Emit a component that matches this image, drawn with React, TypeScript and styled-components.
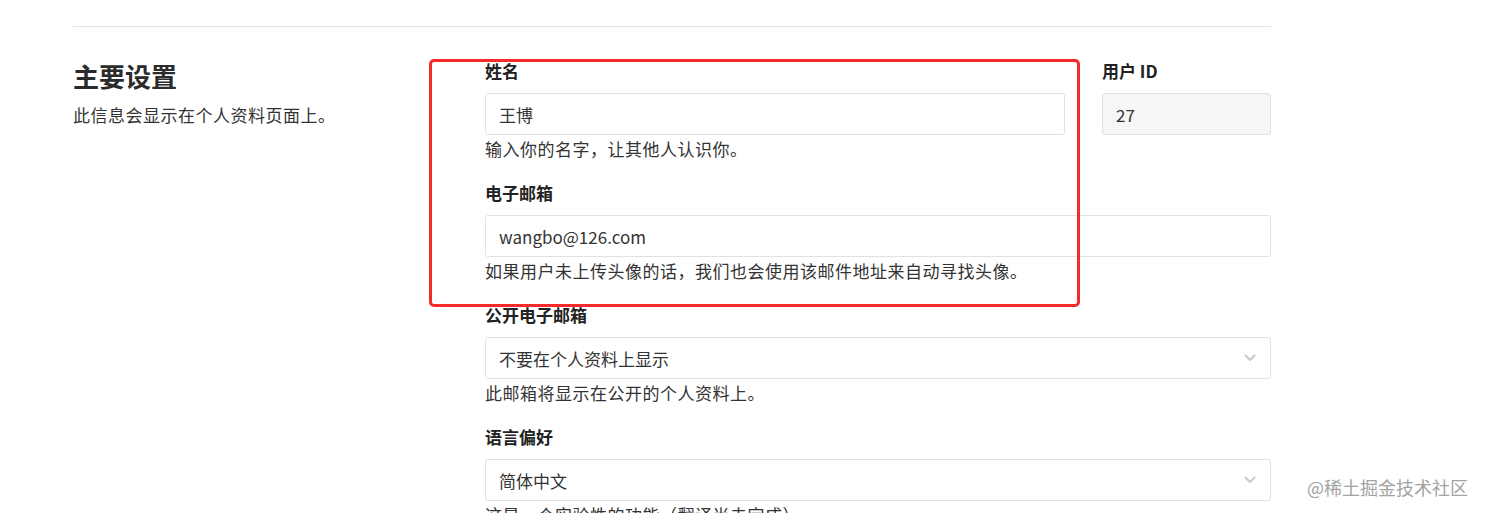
import styled, { createGlobalStyle } from "styled-components";

const GlobalStyle = createGlobalStyle`
  html, body {
    margin: 0;
    padding: 0;
    background: #ffffff;
  }
  body {
    font-family: "Noto Sans CJK SC", "Liberation Sans", sans-serif;
    color: #333333;
  }
`;

interface Option {
  label: string;
  hint: string;
  value: string;
}

const selectFields: Option[] = [
  { label: "公开电子邮箱", value: "不要在个人资料上显示", hint: "此邮箱将显示在公开的个人资料上。" },
  { label: "语言偏好", value: "简体中文", hint: "这是一个实验性的功能（翻译尚未完成）" },
];

const Chevron = () => (
  <svg width="12" height="8" viewBox="0 0 12 8" fill="none">
    <polyline points="1.5,1.5 6,6 10.5,1.5" stroke="#c9c9c9" strokeWidth="2" strokeLinecap="round" strokeLinejoin="round" />
  </svg>
);

export default function App() {
  return (
    <Page>
      <GlobalStyle />
      <Divider />
      <Section>
        <Intro>
          <Heading>主要设置</Heading>
          <Subtitle>此信息会显示在个人资料页面上。</Subtitle>
        </Intro>
        <Fields>
          <Row>
            <Field>
              <Label>姓名</Label>
              <Input readOnly value="王博" />
              <Hint>输入你的名字，让其他人认识你。</Hint>
            </Field>
            <IdField>
              <Label>用户 ID</Label>
              <Input readOnly value="27" $disabled />
            </IdField>
          </Row>
          <Field>
            <Label>电子邮箱</Label>
            <Input readOnly value="wangbo@126.com" />
            <Hint>如果用户未上传头像的话，我们也会使用该邮件地址来自动寻找头像。</Hint>
          </Field>
          {selectFields.map((f) => (
            <Field key={f.label}>
              <Label>{f.label}</Label>
              <SelectBox role="combobox">
                <span>{f.value}</span>
                <Chevron />
              </SelectBox>
              <Hint>{f.hint}</Hint>
            </Field>
          ))}
        </Fields>
      </Section>
      <Highlight />
      <Watermark>@稀土掘金技术社区</Watermark>
    </Page>
  );
}

const Page = styled.div`
  position: relative;
  height: 513px;
  overflow: hidden;
  padding: 26px 0 0 73px;
  box-sizing: border-box;
`;

const Divider = styled.div`
  width: 1198px;
  height: 1px;
  background: #e4e4e4;
`;

const Section = styled.div`
  display: grid;
  grid-template-columns: 412px 786px;
  padding-top: 32px;
`;

const Intro = styled.div`
  display: flex;
  flex-direction: column;
`;

const Heading = styled.h2`
  margin: 0;
  font-size: 26px;
  line-height: 34px;
  font-weight: 700;
  color: #2b2b2b;
`;

const Subtitle = styled.p`
  margin: 10px 0 0;
  font-size: 17px;
  line-height: 24px;
  letter-spacing: 0.5px;
  color: #333333;
`;

const Fields = styled.div`
  display: flex;
  flex-direction: column;
  gap: 20px;
`;

const Row = styled.div`
  display: flex;
  gap: 37px;
`;

const Field = styled.div`
  display: flex;
  flex-direction: column;
  flex: 1;
`;

const IdField = styled(Field)`
  flex: 0 0 169px;
`;

const Label = styled.label`
  font-size: 17px;
  line-height: 24px;
  font-weight: 700;
  color: #222222;
  margin-bottom: 10px;
`;

const Input = styled.input<{ $disabled?: boolean }>`
  box-sizing: border-box;
  height: 42px;
  width: 100%;
  padding: 0 13px;
  border: 1px solid #e1e1e1;
  border-radius: 3px;
  background: ${(p) => (p.$disabled ? "#f6f6f6" : "#ffffff")};
  font-family: inherit;
  font-size: 17px;
  color: #333333;
  outline: none;
`;

const SelectBox = styled.div`
  box-sizing: border-box;
  height: 42px;
  display: flex;
  align-items: center;
  justify-content: space-between;
  padding: 0 14px 0 13px;
  border: 1px solid #e1e1e1;
  border-radius: 3px;
  font-size: 17px;
  color: #333333;
`;

const Hint = styled.div`
  margin-top: 2px;
  font-size: 17px;
  line-height: 24px;
  letter-spacing: 0.5px;
  color: #333333;
`;

const Highlight = styled.div`
  position: absolute;
  left: 429px;
  top: 59px;
  width: 651px;
  height: 248px;
  box-sizing: border-box;
  border: 3px solid #f52a2a;
  border-radius: 5px;
  pointer-events: none;
`;

const Watermark = styled.div`
  position: absolute;
  right: 17px;
  bottom: 14px;
  font-size: 18px;
  line-height: 24px;
  color: #a3a3a3;
  pointer-events: none;
`;
